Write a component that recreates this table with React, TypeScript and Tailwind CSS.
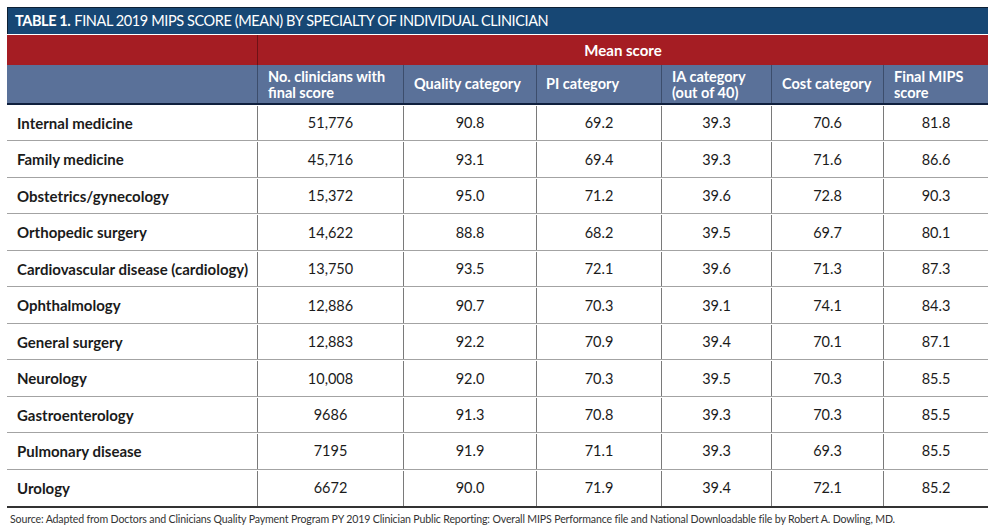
import React from "react";

const rows: [string, string, string, string, string, string, string][] = [
  ["Internal medicine", "51,776", "90.8", "69.2", "39.3", "70.6", "81.8"],
  ["Family medicine", "45,716", "93.1", "69.4", "39.3", "71.6", "86.6"],
  ["Obstetrics/gynecology", "15,372", "95.0", "71.2", "39.6", "72.8", "90.3"],
  ["Orthopedic surgery", "14,622", "88.8", "68.2", "39.5", "69.7", "80.1"],
  ["Cardiovascular disease (cardiology)", "13,750", "93.5", "72.1", "39.6", "71.3", "87.3"],
  ["Ophthalmology", "12,886", "90.7", "70.3", "39.1", "74.1", "84.3"],
  ["General surgery", "12,883", "92.2", "70.9", "39.4", "70.1", "87.1"],
  ["Neurology", "10,008", "92.0", "70.3", "39.5", "70.3", "85.5"],
  ["Gastroenterology", "9686", "91.3", "70.8", "39.3", "70.3", "85.5"],
  ["Pulmonary disease", "7195", "91.9", "71.1", "39.3", "69.3", "85.5"],
  ["Urology", "6672", "90.0", "71.9", "39.4", "72.1", "85.2"],
];

const cols = "grid grid-cols-[251px_146px_133px_125px_110px_112px_104px]";

export default function App() {
  return (
    <div className="w-[1000px] h-[531px] bg-white pl-[7px] pt-[7px] font-['Lato','Open_Sans',sans-serif] text-[#1b1b1b]">
      <div className="w-[981px]">
        {/* Title bar */}
        <div className="h-[27px] flex items-center bg-[#174774] border-t border-l border-[#0d2034] px-[7px] text-white text-[14.5px] tracking-[-0.4px]">
          <span className="font-bold mr-[4px]">TABLE 1.</span>
          <span>FINAL 2019 MIPS SCORE (MEAN) BY SPECIALTY OF INDIVIDUAL CLINICIAN</span>
        </div>

        {/* Red band */}
        <div className="mt-[1px] grid grid-cols-[251px_730px] h-[30px] bg-[#a51d23] text-white">
          <div className="border-r border-[#6e1216]" />
          <div className="flex items-center justify-center font-bold text-[15px]">Mean score</div>
        </div>

        {/* Blue header */}
        <div className={`${cols} h-[40px] bg-[#5a7199] text-white font-bold text-[14.5px] leading-[16px] border-b-2 border-[#0f1f3d]`}>
          <div className="border-r border-[#3c4d6c]" />
          <div className="border-r border-[#3c4d6c] flex items-center px-[10px] pt-[1px]">No. clinicians with final score</div>
          <div className="border-r border-[#3c4d6c] flex items-center px-[10px]">Quality category</div>
          <div className="border-r border-[#3c4d6c] flex items-center px-[9px]">PI category</div>
          <div className="border-r border-[#3c4d6c] flex items-center px-[10px] pt-[1px]">IA category (out of 40)</div>
          <div className="border-r border-[#3c4d6c] flex items-center px-[10px]">Cost category</div>
          <div className="flex items-center px-[10px] pt-[1px]">Final MIPS score</div>
        </div>

        {/* Body */}
        <div className="grid grid-rows-[repeat(11,1fr)] h-[403px] border-b-2 border-[#333]">
          {rows.map((r, i) => (
            <div
              key={r[0]}
              className={`${cols} text-[14.5px] pt-[1px] ${i < rows.length - 1 ? "border-b border-[#a3a3a3]" : ""}`}
            >
              <div className="border-r border-[#7a7a7a] flex items-center pl-[10px] font-bold text-[15px]">{r[0]}</div>
              {r.slice(1).map((v, j) => (
                <div
                  key={j}
                  className={`flex items-center justify-center ${j < 5 ? "border-r border-[#7a7a7a]" : ""}`}
                >
                  {v}
                </div>
              ))}
            </div>
          ))}
        </div>

        <div className="pt-[4px] pl-[3px] text-[10.6px] text-[#333] tracking-[-0.15px]">
          Source: Adapted from Doctors and Clinicians Quality Payment Program PY 2019 Clinician Public Reporting: Overall MIPS Performance file and National Downloadable file by Robert A. Dowling, MD.
        </div>
      </div>
    </div>
  );
}
